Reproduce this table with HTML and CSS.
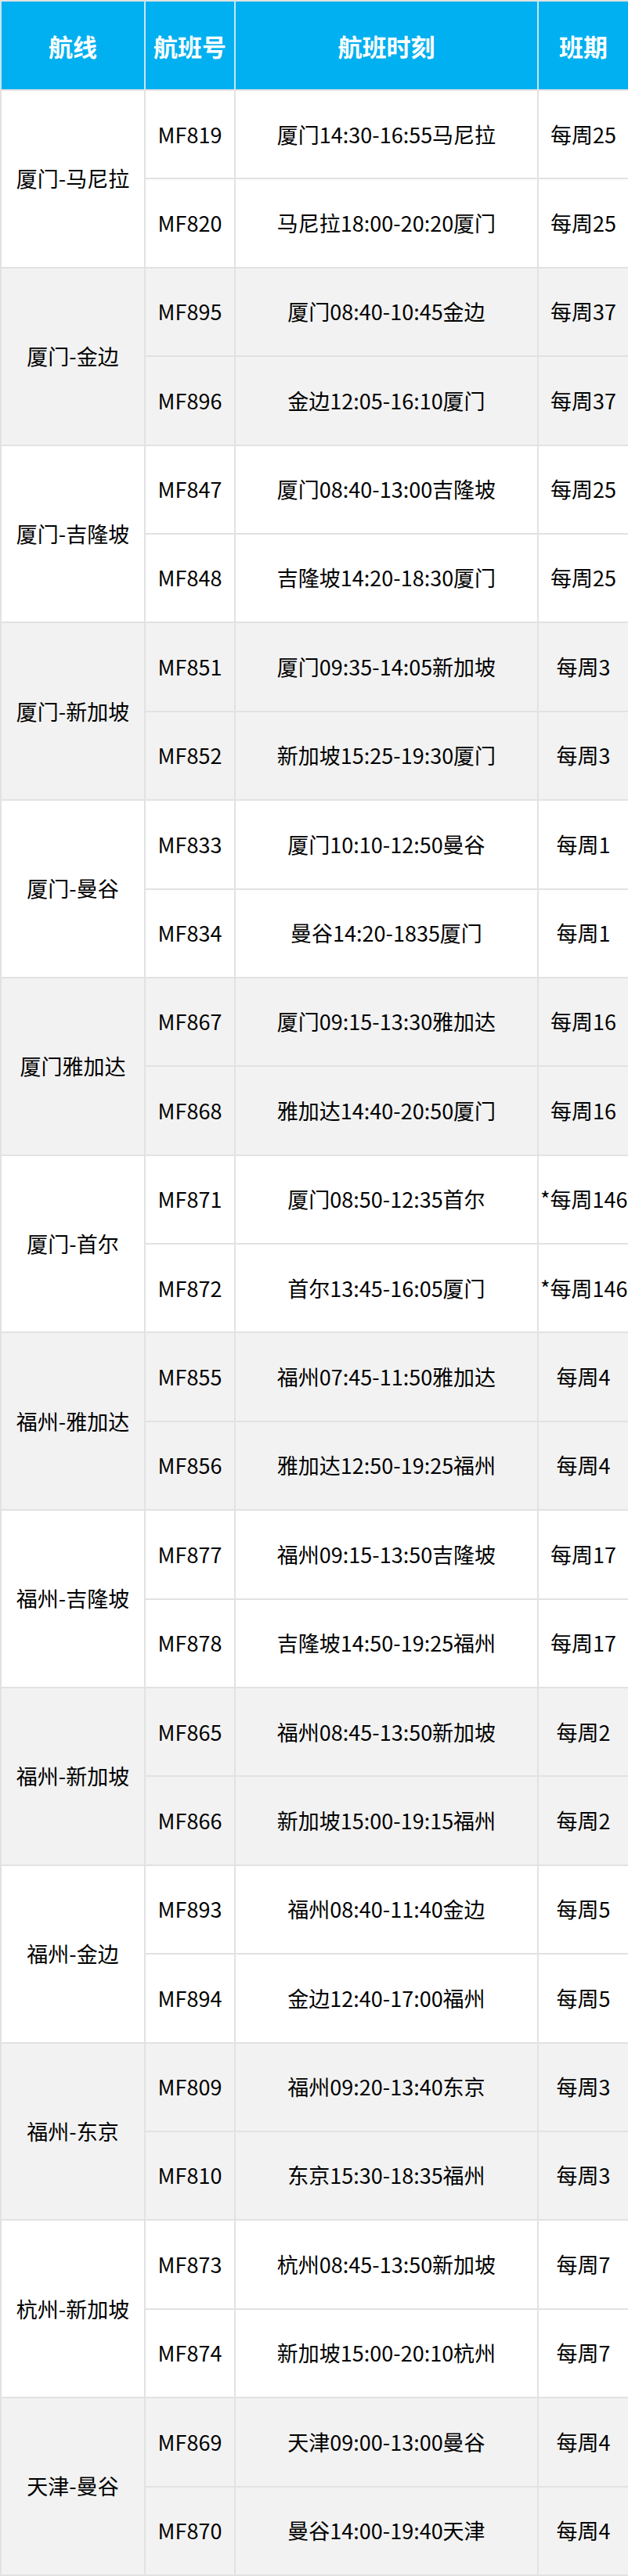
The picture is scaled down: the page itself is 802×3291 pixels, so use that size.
FILE: index.html
```html
<!DOCTYPE html>
<html lang="zh-CN">
<head>
<meta charset="utf-8">
<title>航线</title>
<link rel="stylesheet" href="styles.css">
</head>
<body>
<table class="sched">
<colgroup><col class="c1"><col class="c2"><col class="c3"><col class="c4"></colgroup>
<thead>
<tr class="head"><th>航线</th><th>航班号</th><th>航班时刻</th><th>班期</th></tr>
</thead>
<tbody>
<tr class="w"><td rowspan="2">厦门-马尼拉</td><td>MF819</td><td>厦门14:30-16:55马尼拉</td><td>每周25</td></tr>
<tr class="w"><td>MF820</td><td>马尼拉18:00-20:20厦门</td><td>每周25</td></tr>
<tr class="g"><td rowspan="2">厦门-金边</td><td>MF895</td><td>厦门08:40-10:45金边</td><td>每周37</td></tr>
<tr class="g"><td>MF896</td><td>金边12:05-16:10厦门</td><td>每周37</td></tr>
<tr class="w"><td rowspan="2">厦门-吉隆坡</td><td>MF847</td><td>厦门08:40-13:00吉隆坡</td><td>每周25</td></tr>
<tr class="w"><td>MF848</td><td>吉隆坡14:20-18:30厦门</td><td>每周25</td></tr>
<tr class="g"><td rowspan="2">厦门-新加坡</td><td>MF851</td><td>厦门09:35-14:05新加坡</td><td>每周3</td></tr>
<tr class="g"><td>MF852</td><td>新加坡15:25-19:30厦门</td><td>每周3</td></tr>
<tr class="w"><td rowspan="2">厦门-曼谷</td><td>MF833</td><td>厦门10:10-12:50曼谷</td><td>每周1</td></tr>
<tr class="w"><td>MF834</td><td>曼谷14:20-1835厦门</td><td>每周1</td></tr>
<tr class="g"><td rowspan="2">厦门雅加达</td><td>MF867</td><td>厦门09:15-13:30雅加达</td><td>每周16</td></tr>
<tr class="g"><td>MF868</td><td>雅加达14:40-20:50厦门</td><td>每周16</td></tr>
<tr class="w"><td rowspan="2">厦门-首尔</td><td>MF871</td><td>厦门08:50-12:35首尔</td><td class="star">*每周146</td></tr>
<tr class="w"><td>MF872</td><td>首尔13:45-16:05厦门</td><td class="star">*每周146</td></tr>
<tr class="g"><td rowspan="2">福州-雅加达</td><td>MF855</td><td>福州07:45-11:50雅加达</td><td>每周4</td></tr>
<tr class="g"><td>MF856</td><td>雅加达12:50-19:25福州</td><td>每周4</td></tr>
<tr class="w"><td rowspan="2">福州-吉隆坡</td><td>MF877</td><td>福州09:15-13:50吉隆坡</td><td>每周17</td></tr>
<tr class="w"><td>MF878</td><td>吉隆坡14:50-19:25福州</td><td>每周17</td></tr>
<tr class="g"><td rowspan="2">福州-新加坡</td><td>MF865</td><td>福州08:45-13:50新加坡</td><td>每周2</td></tr>
<tr class="g"><td>MF866</td><td>新加坡15:00-19:15福州</td><td>每周2</td></tr>
<tr class="w"><td rowspan="2">福州-金边</td><td>MF893</td><td>福州08:40-11:40金边</td><td>每周5</td></tr>
<tr class="w"><td>MF894</td><td>金边12:40-17:00福州</td><td>每周5</td></tr>
<tr class="g"><td rowspan="2">福州-东京</td><td>MF809</td><td>福州09:20-13:40东京</td><td>每周3</td></tr>
<tr class="g"><td>MF810</td><td>东京15:30-18:35福州</td><td>每周3</td></tr>
<tr class="w"><td rowspan="2">杭州-新加坡</td><td>MF873</td><td>杭州08:45-13:50新加坡</td><td>每周7</td></tr>
<tr class="w"><td>MF874</td><td>新加坡15:00-20:10杭州</td><td>每周7</td></tr>
<tr class="g"><td rowspan="2">天津-曼谷</td><td>MF869</td><td>天津09:00-13:00曼谷</td><td>每周4</td></tr>
<tr class="g"><td>MF870</td><td>曼谷14:00-19:40天津</td><td>每周4</td></tr>
</tbody>
</table>
</body>
</html>
```

FILE: styles.css
```css
html, body {
  margin: 0;
  padding: 0;
  background: #ffffff;
}
body {
  font-family: "Noto Sans CJK SC", "Noto Sans", sans-serif;
  color: #000000;
}
.sched {
  width: 802px;
  table-layout: fixed;
  border-collapse: collapse;
}
.c1 { width: 184px; }
.c2 { width: 115px; }
.c3 { width: 387px; }
.c4 { width: 116px; }
.sched th,
.sched td {
  border: 2px solid #e2e2e2;
  padding: 0 2px;
  text-align: center;
  vertical-align: middle;
  white-space: nowrap;
  overflow: visible;
}
.head th {
  height: 112px;
  background: #00b0f0;
  color: #ffffff;
  font-size: 31px;
  font-weight: 700;
  line-height: 1;
  border-color: #e2e2e2 #c8e6f2;
}
.sched td {
  height: 111.4px;
  font-size: 27px;
  line-height: 1.2;
  font-weight: 400;
}
.w td { background: #ffffff; }
.g td { background: #f2f2f2; }
.star { text-align: left; }
```
